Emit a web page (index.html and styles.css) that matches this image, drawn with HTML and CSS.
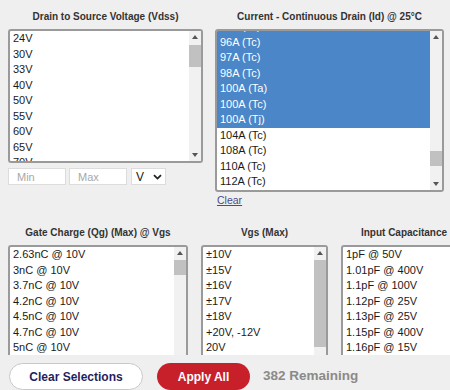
FILE: index.html
```html
<!DOCTYPE html>
<html>
<head>
<meta charset="utf-8">
<link rel="stylesheet" href="styles.css">
</head>
<body>
<div class="page">
  <div class="row row1">
    <div class="filter w-vdss">
      <div class="title">Drain to Source Voltage (Vdss)</div>
      <div class="listbox h134">
        <div class="opts">
          <div class="opt">24V</div>
          <div class="opt">30V</div>
          <div class="opt">33V</div>
          <div class="opt">40V</div>
          <div class="opt">50V</div>
          <div class="opt">55V</div>
          <div class="opt">60V</div>
          <div class="opt">65V</div>
          <div class="opt">70V</div>
        </div>
        <div class="sb">
          <div class="arr up"></div>
          <div class="track"><div class="thumb" style="margin-top:2px;height:22px"></div></div>
          <div class="arr down"></div>
        </div>
      </div>
      <div class="range">
        <input class="inp" placeholder="Min">
        <input class="inp" placeholder="Max">
        <div class="unit"><span>V</span><svg class="chev" width="9" height="6" viewBox="0 0 9 6"><path d="M1 1.2 L4.5 4.6 L8 1.2" fill="none" stroke="#222" stroke-width="1.8"/></svg></div>
      </div>
    </div>
    <div class="filter w-id">
      <div class="title">Current - Continuous Drain (Id) @ 25°C</div>
      <div class="listbox h163">
        <div class="opts">
          <div class="opt sel" style="margin-top:-12px">95A (Tc)</div>
          <div class="opt sel">96A (Tc)</div>
          <div class="opt sel">97A (Tc)</div>
          <div class="opt sel">98A (Tc)</div>
          <div class="opt sel">100A (Ta)</div>
          <div class="opt sel">100A (Tc)</div>
          <div class="opt sel">100A (Tj)</div>
          <div class="opt">104A (Tc)</div>
          <div class="opt">108A (Tc)</div>
          <div class="opt">110A (Tc)</div>
          <div class="opt">112A (Tc)</div>
        </div>
        <div class="sb">
          <div class="arr up"></div>
          <div class="track"><div class="thumb" style="margin-top:108px;height:15px"></div></div>
          <div class="arr down"></div>
        </div>
      </div>
      <a class="clear">Clear</a>
    </div>
  </div>

  <div class="row row2">
    <div class="filter w-qg">
      <div class="title">Gate Charge (Qg) (Max) @ Vgs</div>
      <div class="listbox h134">
        <div class="opts">
          <div class="opt">2.63nC @ 10V</div>
          <div class="opt">3nC @ 10V</div>
          <div class="opt">3.7nC @ 10V</div>
          <div class="opt">4.2nC @ 10V</div>
          <div class="opt">4.5nC @ 10V</div>
          <div class="opt">4.7nC @ 10V</div>
          <div class="opt">5nC @ 10V</div>
        </div>
        <div class="sb">
          <div class="arr up"></div>
          <div class="track"><div class="thumb" style="margin-top:1px;height:15px"></div></div>
          <div class="arr down"></div>
        </div>
      </div>
    </div>
    <div class="filter w-vgs">
      <div class="title">Vgs (Max)</div>
      <div class="listbox h134">
        <div class="opts">
          <div class="opt">±10V</div>
          <div class="opt">±15V</div>
          <div class="opt">±16V</div>
          <div class="opt">±17V</div>
          <div class="opt">±18V</div>
          <div class="opt">+20V, -12V</div>
          <div class="opt">20V</div>
        </div>
        <div class="sb">
          <div class="arr up"></div>
          <div class="track"><div class="thumb" style="margin-top:1px;height:87px"></div></div>
          <div class="arr down"></div>
        </div>
      </div>
    </div>
    <div class="filter w-cap">
      <div class="title">Input Capacitance</div>
      <div class="listbox h134">
        <div class="opts">
          <div class="opt">1pF @ 50V</div>
          <div class="opt">1.01pF @ 400V</div>
          <div class="opt">1.1pF @ 100V</div>
          <div class="opt">1.12pF @ 25V</div>
          <div class="opt">1.13pF @ 25V</div>
          <div class="opt">1.15pF @ 400V</div>
          <div class="opt">1.16pF @ 15V</div>
        </div>
        <div class="sb">
          <div class="arr up"></div>
          <div class="track"><div class="thumb" style="margin-top:1px;height:20px"></div></div>
          <div class="arr down"></div>
        </div>
      </div>
    </div>
  </div>
</div>

<div class="bar">
  <div class="btn btn-clear">Clear Selections</div>
  <div class="btn btn-apply">Apply All</div>
  <div class="remaining">382 Remaining</div>
</div>
</body>
</html>
```

FILE: styles.css
```css
html, body {
  margin: 0;
  height: 100%;
  overflow: hidden;
}

body {
  background: #efefef;
  font-family: "Liberation Sans", Arial, sans-serif;
  color: #222;
}

.page {
  padding: 11px 0 0 8px;
}

.row {
  display: flex;
  align-items: flex-start;
}

.row1 {
  gap: 12px;
}

.row2 {
  gap: 13px;
  margin-top: 21px;
}

.filter {
  display: flex;
  flex-direction: column;
  flex-shrink: 0;
}

.w-vdss { width: 195px; }
.w-id { width: 229px; }
.w-qg { width: 180px; }
.w-vgs { width: 127px; }
.w-cap { width: 126px; }

.title {
  font-size: 10px;
  font-weight: bold;
  line-height: 12px;
  text-align: center;
  color: #333;
  white-space: nowrap;
  margin-bottom: 6px;
}

.listbox {
  display: flex;
  box-sizing: border-box;
  border: 2px solid #9a9a9a;
  border-radius: 3px;
  background: #fff;
  overflow: hidden;
}

.h134 { height: 134px; }
.h163 { height: 163px; }

.opts {
  flex: 1;
  overflow: hidden;
  font-size: 11px;
}

.opt {
  height: 15.5px;
  line-height: 15.5px;
  padding-left: 3px;
  white-space: nowrap;
  color: #1a1a1a;
}

.opt.sel {
  background: #4a86c8;
  color: #fff;
}

.sb {
  width: 12px;
  flex-shrink: 0;
  display: flex;
  flex-direction: column;
  background: #f1f1f1;
}

.arr {
  height: 12px;
  display: flex;
  align-items: center;
  justify-content: center;
}

.arr::before {
  content: "";
  border-left: 3px solid transparent;
  border-right: 3px solid transparent;
}

.arr.up::before {
  border-bottom: 4px solid #555;
}

.arr.down::before {
  border-top: 4px solid #555;
}

.track {
  flex: 1;
}

.thumb {
  background: #c1c1c1;
}

.range {
  display: flex;
  gap: 3px;
  margin-top: 5px;
}

.inp {
  width: 58px;
  height: 17px;
  box-sizing: border-box;
  border: 1px solid #dcdcdc;
  background: #fff;
  font-family: "Liberation Sans", Arial, sans-serif;
  font-size: 11px;
  padding: 0 0 0 8px;
  margin: 0;
  outline: none;
}

.inp::placeholder {
  color: #a8a8a8;
}

.unit {
  width: 35px;
  height: 17px;
  box-sizing: border-box;
  margin-left: 1px;
  border: 1px solid #dcdcdc;
  background: #fff;
  display: flex;
  align-items: center;
  justify-content: space-between;
  padding: 0 3px 0 4px;
  font-size: 12px;
  color: #222;
}

.chev {
  display: block;
}

.clear {
  align-self: flex-start;
  margin: 2px 0 0 2px;
  font-size: 10.5px;
  line-height: 12px;
  color: #4b4b8a;
  text-decoration: underline;
}

.bar {
  position: fixed;
  left: 0;
  right: 0;
  bottom: 0;
  height: 35px;
  box-sizing: border-box;
  background: #efefef;
  display: flex;
  align-items: flex-start;
  gap: 14px;
  padding: 8px 0 0 9px;
}

.btn {
  height: 27px;
  box-sizing: border-box;
  border-radius: 14px;
  font-size: 12px;
  font-weight: bold;
  display: flex;
  align-items: center;
  justify-content: center;
}

.btn-clear {
  width: 134px;
  background: #fff;
  border: 1px solid #c8c8c8;
  color: #1f1f5e;
}

.btn-apply {
  width: 93px;
  background: #c8202b;
  color: #fff;
}

.remaining {
  margin-left: -1px;
  font-size: 13.5px;
  font-weight: bold;
  line-height: 26px;
  color: #8a8a8a;
}
```
